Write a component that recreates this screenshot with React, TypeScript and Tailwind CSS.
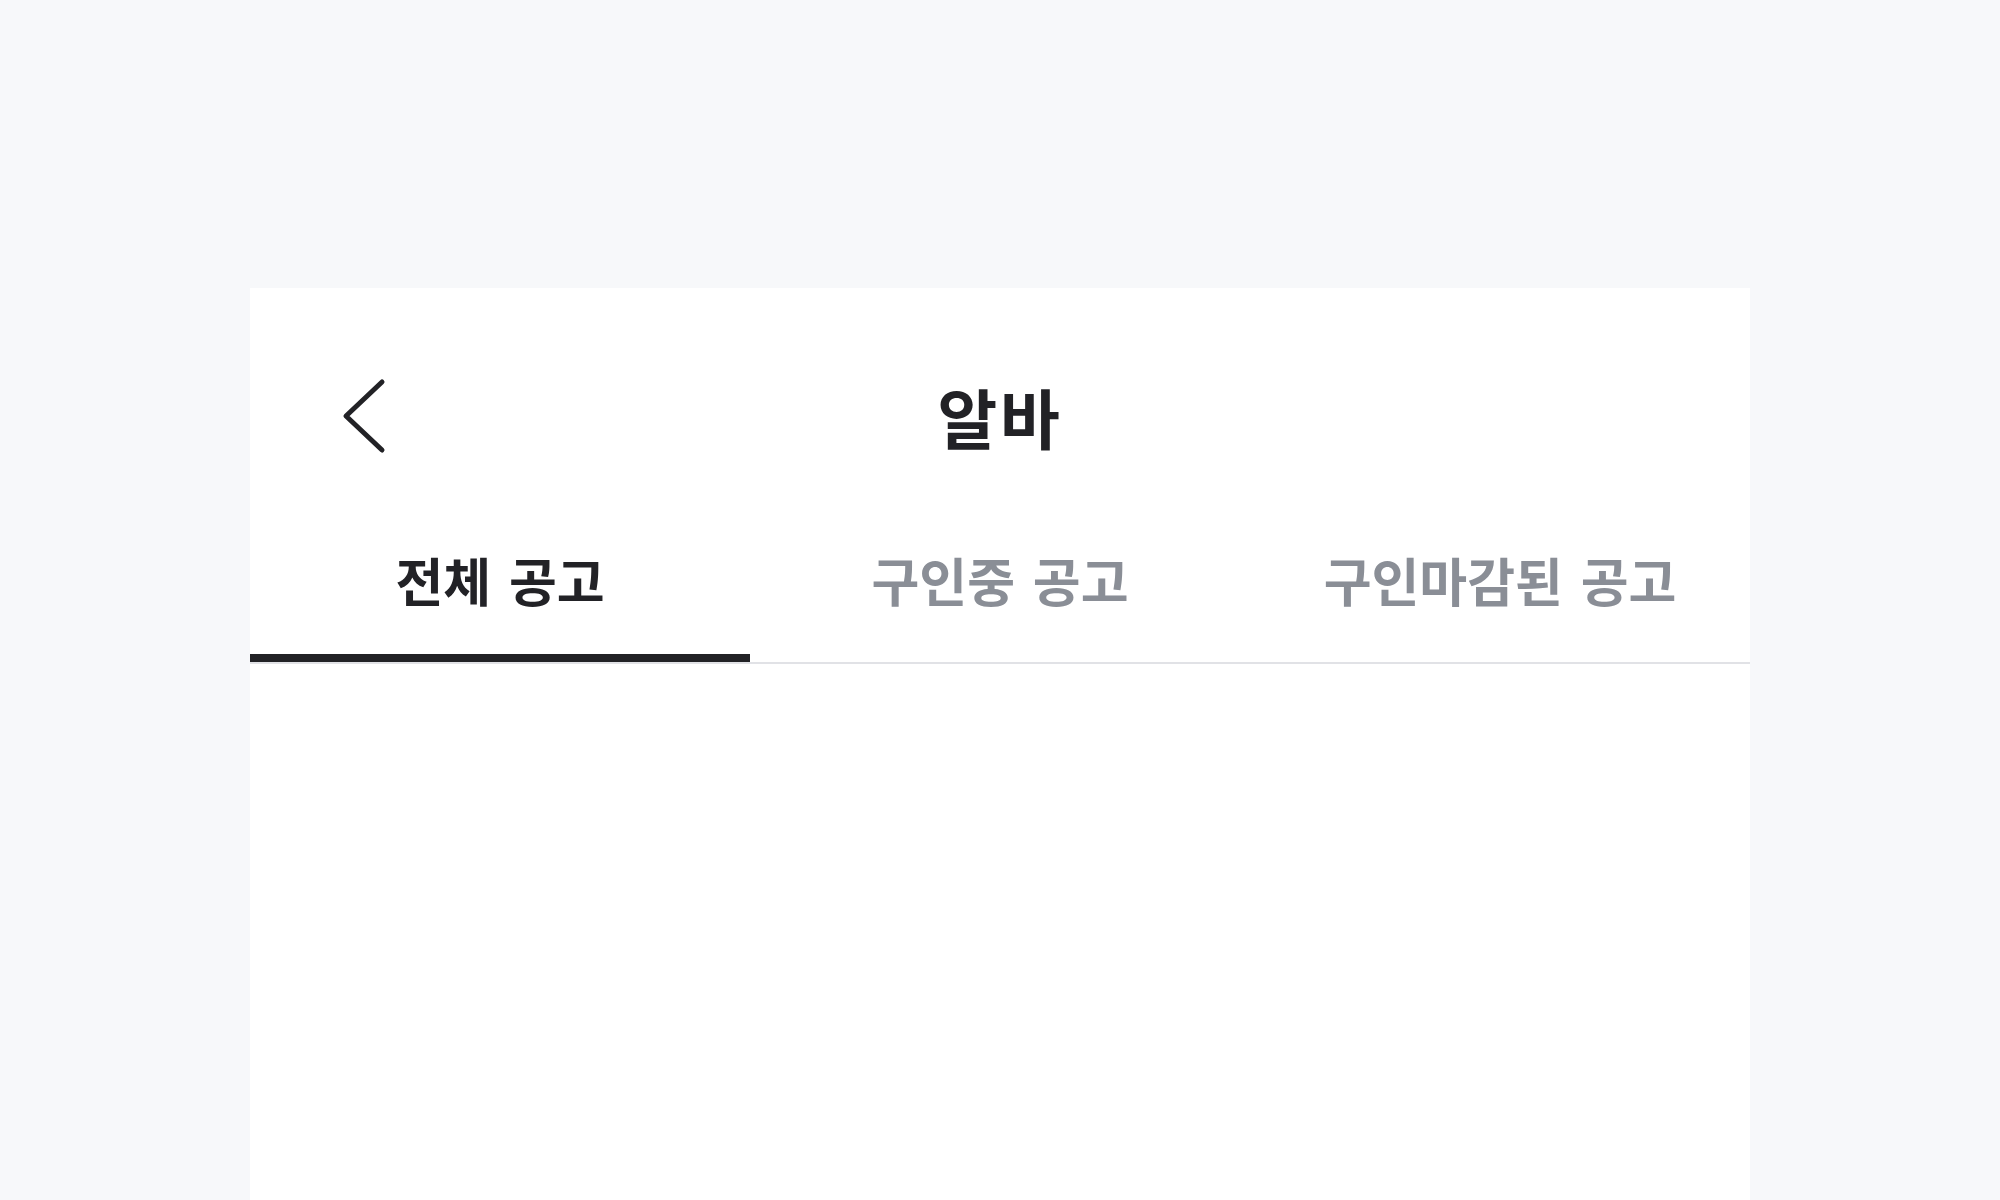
import { useState } from "react";

const TABS = ["전체 공고", "구인중 공고", "구인마감된 공고"];

function BackIcon() {
  return (
    <svg width="48" height="80" viewBox="0 0 48 80" fill="none">
      <path
        d="M42 6 L6 40 L42 74"
        stroke="#222226"
        strokeWidth="5"
        strokeLinecap="round"
        strokeLinejoin="round"
      />
    </svg>
  );
}

export default function App() {
  const [active, setActive] = useState(0);

  return (
    <div
      className="min-h-[1200px] bg-[#f7f8fa] pt-[288px] overflow-hidden"
      style={{ fontFamily: '"Noto Sans CJK KR", "Noto Sans", sans-serif' }}
    >
      <div className="mx-auto w-[1500px] min-h-[912px] bg-white pt-[64px]">
        {/* header */}
        <div className="grid grid-cols-[1fr_auto_1fr] items-center h-[128px] px-[90px]">
          <button className="flex items-center w-fit">
            <BackIcon />
          </button>
          <h1 className="text-[65px] leading-none font-bold tracking-[0.04em] text-[#222226]">
            알바
          </h1>
          <div />
        </div>

        {/* tabs */}
        <div className="flex border-b-2 border-[#e1e2e6]">
          {TABS.map((t, i) => (
            <button
              key={t}
              onClick={() => setActive(i)}
              className="flex-1 flex flex-col"
            >
              <span
                className={
                  "h-[174px] pt-[26px] flex items-center justify-center text-[52px] leading-none font-bold [word-spacing:6px] " +
                  (i === active ? "text-[#222226]" : "text-[#8a8e96]")
                }
              >
                {t}
              </span>
              <span
                className={
                  "h-[8px] w-full " + (i === active ? "bg-[#222226]" : "bg-transparent")
                }
              />
            </button>
          ))}
        </div>
      </div>
    </div>
  );
}
